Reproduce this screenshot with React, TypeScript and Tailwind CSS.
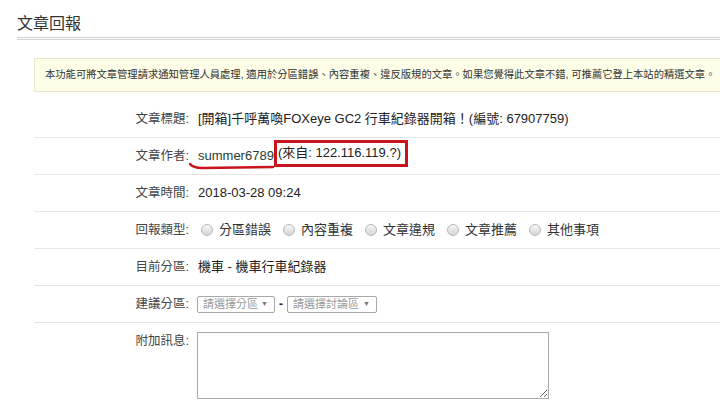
import React from "react";

const FONT = { fontFamily: '"Liberation Sans", Arial, "Noto Sans CJK TC", sans-serif' };

function Row({ label, children, last }: { label: string; children: React.ReactNode; last?: boolean }) {
  return (
    <div className={"flex items-center h-[37px] " + (last ? "" : "border-b border-[#e6e6e6]")}>
      <div className="w-[156px] shrink-0 text-right text-[12.5px] text-[#444] pr-[1px]">{label}</div>
      <div className="pl-[8px] flex items-center text-[13px] text-[#222] whitespace-nowrap">{children}</div>
    </div>
  );
}

function Radio({ text }: { text: string }) {
  return (
    <span className="flex items-center mr-[12px]">
      <span className="w-[12px] h-[12px] rounded-full border border-[#b8b8b8] bg-gradient-to-b from-[#f7f7f7] to-[#d6d6d6] mr-[6px]" />
      <span className="text-[13px] text-[#333]">{text}</span>
    </span>
  );
}

function Select({ text, w }: { text: string; w: string }) {
  return (
    <span className={"h-[17px] border border-[#a8a8a8] rounded-[2px] bg-white flex items-center justify-between pl-[5px] pr-[6px] text-[11px] text-[#999] " + w}>
      <span>{text}</span>
      <span className="text-[7px] text-[#777]">▼</span>
    </span>
  );
}

export default function App() {
  return (
    <div className="w-[720px] h-[407px] overflow-hidden bg-white" style={FONT}>
      <div className="pl-[17px] pt-[13px]">
        <h2 className="text-[16px] leading-[22px] text-[#333] pb-[2px] border-b-[3px] border-double border-[#d2d2d2]">
          文章回報
        </h2>
        <div className="pl-[17px]">
          <div className="mt-[18px] w-[700px] h-[34px] bg-[#fdfde8] border border-[#e8e8cc] flex items-center pl-[10px] text-[10.3px] text-[#333] whitespace-nowrap">
            本功能可將文章管理請求通知管理人員處理, 適用於分區錯誤、內容重複、違反版規的文章。如果您覺得此文章不錯, 可推薦它登上本站的精選文章。
          </div>
          <div className="mt-[9px]">
            <Row label="文章標題:">[開箱]千呼萬喚FOXeye GC2 行車紀錄器開箱！(編號: 67907759)</Row>
            <Row label="文章作者:">
              <span className="relative text-[#1f3d36]">
                summer6789
                <svg className="absolute left-[-9px] top-[15px]" width="90" height="10" viewBox="0 0 90 10">
                  <path d="M1 3 Q4 7 13 7 L84 6" fill="none" stroke="#c8141c" strokeWidth="2.6" strokeLinecap="round" />
                </svg>
              </span>
              <span className="h-[27px] mb-[6px] border-[3px] border-[#c8141c] flex items-center pl-[1px] pr-[4px]">
                (來自: 122.116.119.?)
              </span>
            </Row>
            <Row label="文章時間:">2018-03-28 09:24</Row>
            <Row label="回報類型:">
              <span className="flex items-center ml-[3px]">
                <Radio text="分區錯誤" />
                <Radio text="內容重複" />
                <Radio text="文章違規" />
                <Radio text="文章推薦" />
                <Radio text="其他事項" />
              </span>
            </Row>
            <Row label="目前分區:">機車 - 機車行車紀錄器</Row>
            <Row label="建議分區:">
              <span className="flex items-center -ml-[1px]">
                <Select text="請選擇分區" w="w-[78px]" />
                <span className="mx-[4px] text-[12px] font-bold text-[#222]">-</span>
                <Select text="請選擇討論區" w="w-[90px]" />
              </span>
            </Row>
            <div className="flex items-start pt-[9px]">
              <div className="w-[156px] shrink-0 text-right text-[12.5px] leading-[18px] text-[#444] pr-[1px]">附加訊息:</div>
              <div className="pl-[7px]">
                <textarea className="block w-[352px] h-[67px] border border-[#a9a9a9] bg-white outline-none resize" />
              </div>
            </div>
          </div>
        </div>
      </div>
    </div>
  );
}
